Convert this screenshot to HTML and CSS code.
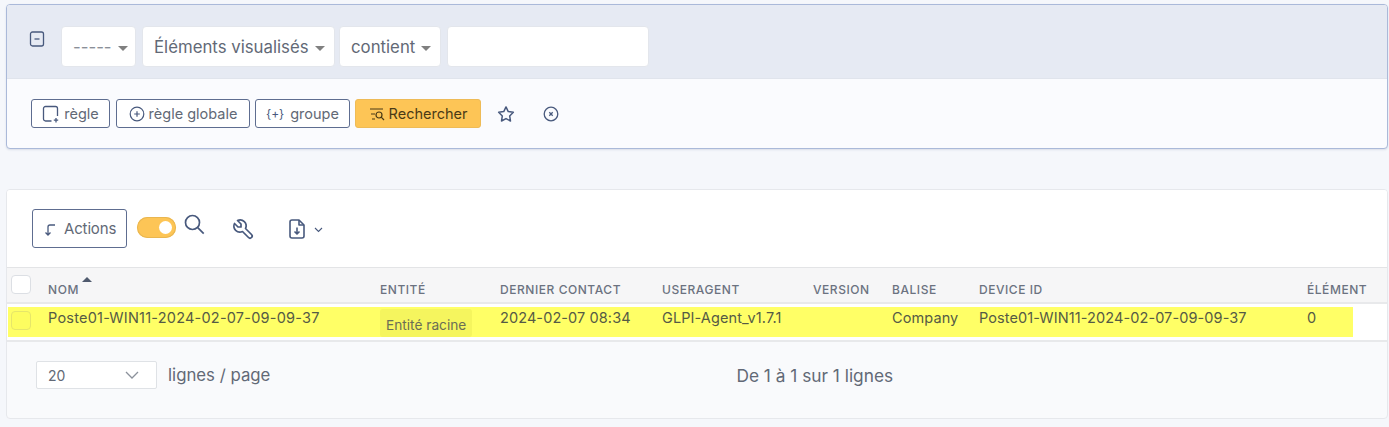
FILE: index.html
```html
<!DOCTYPE html>
<html lang="fr">
  <head>
    <meta charset="utf-8">
    <meta name="viewport" content="width=device-width, initial-scale=1.0">
    <title>Agents</title>
    <link rel="stylesheet" href="styles.css">
  </head>
  <body>
    <section class="search-card">
      <div class="criteria">
        <svg class="icon-minus" width="16" height="16" viewBox="0 0 16 16" fill="none" stroke="#48597d" stroke-width="1.3"><rect x="1.5" y="1" width="13" height="14" rx="2"/><path d="M5.5 8h5"/></svg>
        <div class="select select-dash">----- <i class="caret"></i></div>
        <div class="select select-field">Éléments visualisés <i class="caret"></i></div>
        <div class="select select-op">contient <i class="caret"></i></div>
        <div class="select select-value"></div>
      </div>
      <div class="search-actions">
        <button class="btn btn-rule">
          <svg width="18" height="18" viewBox="0 0 18 18" fill="none" stroke="#48597d" stroke-width="1.3"><path d="M9.500 16H3.500a2 2 0 0 1-2-2V3.500a2 2 0 0 1 2-2h10a2 2 0 0 1 2 2V11"/><path d="M14 13v4.500M11.800 15.200h4.400"/></svg>
          règle
        </button>
        <button class="btn btn-global">
          <svg width="16" height="16" viewBox="0 0 16 16" fill="none" stroke="#48597d" stroke-width="1.2"><circle cx="8" cy="8" r="6.800"/><path d="M8 5.200v5.600M5.200 8h5.600"/></svg>
          règle globale
        </button>
        <button class="btn btn-group"><span class="braces">{+}</span> groupe</button>
        <button class="btn btn-search">
          <svg width="16" height="14" viewBox="0 0 16 14" fill="none" stroke="#4a3a16" stroke-width="1.2"><path d="M1 2h13M2 7h4M3 12h3"/><circle cx="10" cy="8" r="3"/><path d="M12.200 10.200 15 13"/></svg>
          Rechercher
        </button>
        <svg class="icon-star" width="20" height="20" viewBox="0 0 24 24" fill="none" stroke="#48597d" stroke-width="1.8" stroke-linejoin="round"><path d="M12 3.500l2.700 5.600 6.100.9-4.400 4.300 1 6.100-5.400-2.900-5.400 2.900 1-6.100L3.200 10l6.100-.9z"/></svg>
        <svg class="icon-clear" width="16" height="16" viewBox="0 0 16 16" fill="none" stroke="#48597d" stroke-width="1.300"><circle cx="8" cy="8" r="6.800"/><path d="M6.300 6.300l3.400 3.400M9.700 6.300l-3.400 3.400"/></svg>
      </div>
    </section>

    <section class="list-card">
      <div class="toolbar">
        <button class="btn-actions">
          <svg width="12" height="14" viewBox="0 0 12 14" fill="none" stroke="#48597d" stroke-width="1.300"><path d="M11 3H6a2 2 0 0 0-2 2v8M1.500 10.500 4 13l2.500-2.500"/></svg>
          Actions
        </button>
        <span class="toggle"><i></i></span>
        <svg class="icon-search" width="24" height="24" viewBox="0 0 24 24" fill="none" stroke="#48597d" stroke-width="1.700"><circle cx="10.500" cy="9.500" r="7"/><path d="M15.700 14.700l6 6"/></svg>
        <svg class="icon-tool" width="24" height="24" viewBox="0 0 24 24" fill="none" stroke="#48597d" stroke-width="1.700" stroke-linejoin="round"><path d="M7 10h3V7L6.500 3.500a6 6 0 0 1 8 8l6 6a2.100 2.100 0 0 1-3 3l-6-6a6 6 0 0 1-8-8z"/></svg>
        <svg class="icon-export" width="20" height="22" viewBox="0 0 20 22" fill="none" stroke="#48597d" stroke-width="1.600" stroke-linejoin="round"><path d="M12 2H5a2 2 0 0 0-2 2v14a2 2 0 0 0 2 2h10a2 2 0 0 0 2-2V7z"/><path d="M12 2v5h5M10 9.500v6.500M7.500 13.500 10 16l2.500-2.500"/></svg>
        <svg class="icon-chevron" width="9" height="6" viewBox="0 0 9 6" fill="none" stroke="#48597d" stroke-width="1.100"><path d="M1 1l3.500 3.500L8 1"/></svg>
      </div>

      <div class="head-row">
        <div class="cell"><span class="check"></span></div>
        <div class="cell head-sort"><i class="sort"></i>NOM</div>
        <div class="cell">ENTITÉ</div>
        <div class="cell">DERNIER CONTACT</div>
        <div class="cell">USERAGENT</div>
        <div class="cell">VERSION</div>
        <div class="cell">BALISE</div>
        <div class="cell">DEVICE ID</div>
        <div class="cell">ÉLÉMENT</div>
      </div>

      <div class="data-wrap">
        <div class="data-row">
          <div class="cell"><span class="check check-row"></span></div>
          <div class="cell cell-name">Poste01-WIN11-2024-02-07-09-09-37</div>
          <div class="cell"><span class="badge">Entité racine</span></div>
          <div class="cell">2024-02-07 08:34</div>
          <div class="cell">GLPI-Agent_v1.7.1</div>
          <div class="cell"></div>
          <div class="cell">Company</div>
          <div class="cell">Poste01-WIN11-2024-02-07-09-09-37</div>
          <div class="cell">0</div>
        </div>
      </div>

      <div class="pager">
        <div class="page-size">20
          <svg width="14" height="8" viewBox="0 0 14 8" fill="none" stroke="#8b919b" stroke-width="1.300"><path d="M1 1l6 6 6-6"/></svg>
        </div>
        <span class="page-label">lignes / page</span>
        <span class="page-count">De 1 à 1 sur 1 lignes</span>
      </div>
    </section>
  </body>
</html>
```

FILE: styles.css
```css
body {
  font-family: Inter, "Liberation Sans", sans-serif;
  margin: 0;
  padding: 4px 1px 0 6px;
  background-color: #f5f7fb;
  color: #626976;
  overflow: hidden;
}

.search-card {
  height: 145px;
  box-sizing: border-box;
  border: 1px solid #aab9d9;
  border-radius: 4px;
  background-color: #fafbfe;
  box-shadow: 0 1px 2px rgba(70, 90, 130, 0.15);
}
.criteria {
  height: 74px;
  box-sizing: border-box;
  padding: 21px 0 0 22px;
  display: flex;
  align-items: flex-start;
  background-color: #e6eaf3;
  border-bottom: 1px solid #e0e4ec;
  border-radius: 3px 3px 0 0;
}
.icon-minus {
  margin: 5px 16px 0 0;
}
.select {
  height: 41px;
  box-sizing: border-box;
  display: flex;
  align-items: center;
  gap: 6px;
  padding: 0 0 0 11px;
  margin-right: 6px;
  background-color: #fff;
  border: 1px solid #e3e6ec;
  border-radius: 4px;
  font-size: 16.800px;
}
.select-dash { width: 75px; color: #8a8f98; }
.select-field { width: 193px; margin-right: 4px; }
.select-op { width: 102px; }
.select-value { width: 202px; }
.caret {
  width: 0;
  height: 0;
  margin-top: 3px;
  border-left: 5px solid transparent;
  border-right: 5px solid transparent;
  border-top: 5px solid #808080;
}

.search-actions {
  display: flex;
  align-items: center;
  padding: 20px 0 0 24px;
}
.btn {
  height: 29px;
  box-sizing: border-box;
  display: flex;
  align-items: center;
  justify-content: center;
  gap: 4px;
  margin-right: 5px;
  padding: 0;
  font-family: inherit;
  font-size: 14.500px;
  color: #626976;
  background-color: #fff;
  border: 1px solid #5e6d90;
  border-radius: 3px;
}
.btn-rule { width: 79px; margin-right: 6px; }
.btn-global { width: 134px; }
.btn-group { width: 95px; }
.braces { color: #48597d; font-size: 12px; margin-right: 2px; }
.btn-search {
  width: 126px;
  color: #4a3a16;
  background-color: #fdc556;
  border-color: #eebb57;
}
.icon-star { margin: 0 0 0 10px; }
.icon-clear { margin-left: 27px; }

.list-card {
  height: 230px;
  margin-top: 40px;
  box-sizing: border-box;
  border: 1px solid #e6e8ec;
  border-radius: 4px;
  background-color: #f9fafc;
  overflow: hidden;
}
.toolbar {
  height: 77px;
  box-sizing: border-box;
  display: flex;
  align-items: flex-start;
  padding: 19px 0 0 25px;
  background-color: #fff;
}
.btn-actions {
  width: 95px;
  height: 39px;
  box-sizing: border-box;
  display: flex;
  align-items: center;
  gap: 8px;
  padding: 0 0 0 11px;
  font-family: inherit;
  font-size: 15px;
  letter-spacing: -0.15px;
  color: #626976;
  background-color: #fff;
  border: 1px solid #5e6d90;
  border-radius: 3px;
}
.toggle {
  width: 39px;
  height: 21px;
  margin: 8px 0 0 10px;
  display: flex;
  justify-content: flex-end;
  align-items: center;
  box-sizing: border-box;
  padding-right: 4px;
  background-color: #fdc556;
  border-radius: 11px;
  box-shadow: inset 0 0 0 1px #e9b650;
}
.toggle i {
  width: 13px;
  height: 13px;
  border-radius: 50%;
  background-color: #fff;
}
.icon-search { margin: 4px 0 0 6px; }
.icon-tool { margin: 8px 0 0 25px; }
.icon-export { margin: 9px 0 0 32px; }
.icon-chevron { margin: 18px 0 0 7px; }

.head-row,
.data-row {
  display: grid;
  grid-template-columns: 41px 332px 120px 162px 151px 79px 87px 328px 1fr;
}
.cell {
  padding: 0;
  white-space: nowrap;
}
.head-row {
  height: 37px;
  box-sizing: border-box;
  padding-top: 14px;
  background-color: #f6f6f7;
  border-top: 1px solid #e3e4e6;
  border-bottom: 2px solid #e8e9eb;
  font-size: 12px;
  font-weight: 500;
  letter-spacing: 0.55px;
  color: #6b7280;
}
.head-sort {
  position: relative;
}
.sort {
  position: absolute;
  left: 34px;
  top: -5px;
  border-left: 5px solid transparent;
  border-right: 5px solid transparent;
  border-bottom: 5px solid #4f5a6e;
}
.head-row .check {
  margin: -7px 0 0 4px;
}
.check {
  display: block;
  width: 20px;
  height: 19px;
  box-sizing: border-box;
  background-color: #fff;
  border: 1px solid #dcdfe4;
  border-radius: 4px;
}
.data-wrap {
  height: 38px;
  box-sizing: border-box;
  padding: 3px 34px 0 1px;
  background-color: #fff;
  border-bottom: 2px solid #e8e9eb;
}
.data-row {
  height: 30px;
  grid-template-columns: 40px 332px 120px 162px 151px 79px 87px 328px 1fr;
  background-color: #ffff66;
  font-size: 14.500px;
  letter-spacing: 0.1px;
  line-height: 22px;
  color: #555a45;
}
.cell-name {
  letter-spacing: 0.22px;
}
.check-row {
  margin: 4px 0 0 3px;
  background-color: #fdfd60;
  border-color: #e6e66a;
}
.badge {
  display: inline-block;
  height: 28px;
  margin-top: 2px;
  padding: 0 6px;
  box-sizing: border-box;
  font-size: 13.700px;
  letter-spacing: 0;
  line-height: 32px;
  color: #6a6e55;
  background-color: #f5f55e;
  border-radius: 3px;
}
.pager {
  display: flex;
  align-items: center;
  padding: 19px 0 0 29px;
  font-size: 16.800px;
}
.page-size {
  width: 121px;
  height: 28px;
  box-sizing: border-box;
  display: flex;
  align-items: center;
  justify-content: space-between;
  padding: 0 17px 0 11px;
  background-color: #fff;
  border: 1px solid #dfe2e6;
  border-radius: 2px;
  font-size: 14px;
}
.page-label {
  margin-left: 11px;
}
.page-count {
  margin-left: 466px;
  font-size: 17.300px;
}
```
